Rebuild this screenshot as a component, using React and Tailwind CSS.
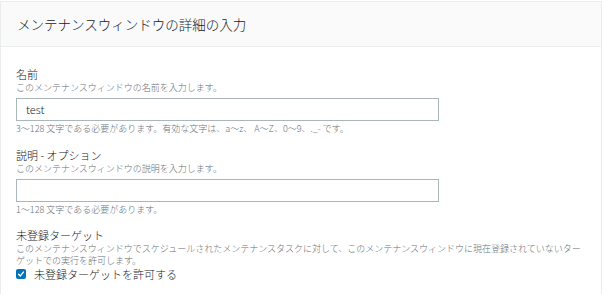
const font = "font-['Noto_Sans_CJK_JP','Noto_Sans',sans-serif]";

function Field({ label, desc, value, hint }) {
  return (
    <div>
      <div className="text-[11px] font-light leading-[14px] text-[#16191f]">{label}</div>
      <div className="mt-px text-[9px] font-light leading-[12px] text-[#687078]">{desc}</div>
      <div className="mt-[4px] flex h-[23px] w-[423px] items-center border border-[#aab7b8] bg-white px-[9px] text-[11px] font-light text-[#16191f]">
        {value}
      </div>
      <div className="mt-[2px] text-[9px] font-light leading-[12px] text-[#687078]">{hint}</div>
    </div>
  );
}

export default function App() {
  return (
    <div className={`${font} min-h-screen bg-white`}>
      <div className="mt-px w-[602px] border border-[#eaeded] bg-white">
        {/* Header */}
        <div className="flex h-[45px] items-center border-b border-[#eaeded] bg-[#fafafa] px-[16px]">
          <h2 className="text-[13.5px] font-light text-[#16191f]">メンテナンスウィンドウの詳細の入力</h2>
        </div>

        {/* Body */}
        <div className="px-[15px] pt-[20px] pb-[20px]">
          <Field
            label="名前"
            desc="このメンテナンスウィンドウの名前を入力します。"
            value="test"
            hint="3～128 文字である必要があります。有効な文字は、a～z、 A～Z、0～9、._- です。"
          />
          <div className="mt-[13px]">
            <Field
              label="説明 - オプション"
              desc="このメンテナンスウィンドウの説明を入力します。"
              value=""
              hint="1～128 文字である必要があります。"
            />
          </div>

          <div className="mt-[12px]">
            <div className="text-[11px] font-light leading-[14px] text-[#16191f]">未登録ターゲット</div>
            <p className="mt-px whitespace-nowrap text-[9px] font-light leading-[11.5px] text-[#687078]">
              このメンテナンスウィンドウでスケジュールされたメンテナンスタスクに対して、このメンテナンスウィンドウに現在登録されていないター
              <br />
              ゲットでの実行を許可します。
            </p>
            <label className="mt-px flex items-center gap-[8px]">
              <span className="flex h-[10px] w-[10px] items-center justify-center rounded-[2px] bg-[#0073bb]">
                <svg viewBox="0 0 10 10" className="h-[8px] w-[8px]" fill="none" stroke="white" strokeWidth="1.8" strokeLinecap="round" strokeLinejoin="round">
                  <path d="M2 5.2 L4.2 7.4 L8 2.6" />
                </svg>
              </span>
              <span className="text-[11px] font-light leading-[14px] text-[#16191f]">未登録ターゲットを許可する</span>
            </label>
          </div>
        </div>
      </div>
    </div>
  );
}
